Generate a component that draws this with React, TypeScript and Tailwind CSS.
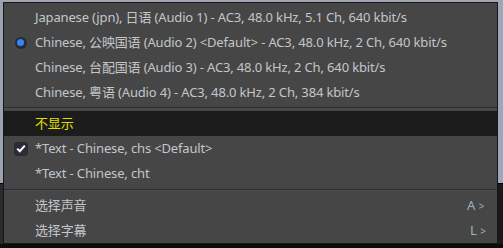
import React from "react";

const font = { fontFamily: '"Noto Sans", "Noto Sans CJK SC", sans-serif' };

function Row({ children, left, right, className = "" }: { children: React.ReactNode; left?: React.ReactNode; right?: React.ReactNode; className?: string }) {
  return (
    <div className={`flex items-center h-[25px] ${className}`}>
      <div className="w-[31px] flex items-center justify-center pl-[2px]">{left}</div>
      <div className="flex-1 whitespace-nowrap text-[13px] leading-none tracking-[-0.15px]">{children}</div>
      {right && <div className="w-[30px] text-[13px] leading-none">{right}</div>}
    </div>
  );
}

function Sep({ h = "h-[6px]" }: { h?: string }) {
  return (
    <div className={`${h} flex flex-col justify-center`}>
      <div className="h-px bg-[#2c2c36]" />
      <div className="h-px bg-[#4e4e4e]" />
    </div>
  );
}

export default function App() {
  return (
    <div className="w-[503px] h-[248px] flex flex-col bg-[#0c0c0c]" style={font}>
      <div className="flex h-[244px]">
        <div className="w-[3px] flex flex-col">
          <div className="h-[183px] bg-[#9aa3ae]" />
          <div className="h-px bg-black" />
          <div className="flex-1 bg-[#2a2a2a]" />
        </div>
        <div className="flex flex-col w-[495px]">
          <div className="h-[3px] bg-[#a0a7b0]" />
          <div className="flex-1 border border-[#161616] bg-[#464646] text-[#c3c6ca] pt-[2px] flex flex-col">
            <Row>Japanese (jpn), 日语 (Audio 1) - AC3, 48.0 kHz, 5.1 Ch, 640 kbit/s</Row>
            <Row
              left={
                <div className="w-[12px] h-[12px] rounded-full bg-[#2a2a30] flex items-center justify-center">
                  <div className="w-[7px] h-[7px] rounded-full bg-[#2f86ff]" />
                </div>
              }
            >
              Chinese, 公映国语 (Audio 2) &lt;Default&gt; - AC3, 48.0 kHz, 2 Ch, 640 kbit/s
            </Row>
            <Row>Chinese, 台配国语 (Audio 3) - AC3, 48.0 kHz, 2 Ch, 640 kbit/s</Row>
            <Row>Chinese, 粤语 (Audio 4) - AC3, 48.0 kHz, 2 Ch, 384 kbit/s</Row>
            <Sep />
            <Row className="bg-[#1c1c1c] text-[#e2e000]">不显示</Row>
            <Row
              left={
                <div className="w-[14px] h-[14px] rounded-[3px] bg-[#2c2c38] flex items-center justify-center">
                  <svg width="10" height="9" viewBox="0 0 10 9">
                    <path d="M1.2 4.6 L3.8 7.2 L8.8 1.6" stroke="#ffffff" strokeWidth="2" fill="none" />
                  </svg>
                </div>
              }
            >
              *Text - Chinese, chs &lt;Default&gt;
            </Row>
            <Row>*Text - Chinese, cht</Row>
            <Sep h="h-[7px]" />
            <Row right={<span className="text-[#9fb0c4]">A <span className="text-[10px]">&gt;</span></span>}>选择声音</Row>
            <Row right={<span className="text-[#9fb0c4] pl-[3px]">L <span className="text-[10px]">&gt;</span></span>}>选择字幕</Row>
          </div>
        </div>
        <div className="w-[5px] flex flex-col">
          <div className="h-[183px] bg-[#9aa8ba]" />
          <div className="h-px bg-black" />
          <div className="flex-1 bg-[#1a1a1a]" />
        </div>
      </div>
    </div>
  );
}
